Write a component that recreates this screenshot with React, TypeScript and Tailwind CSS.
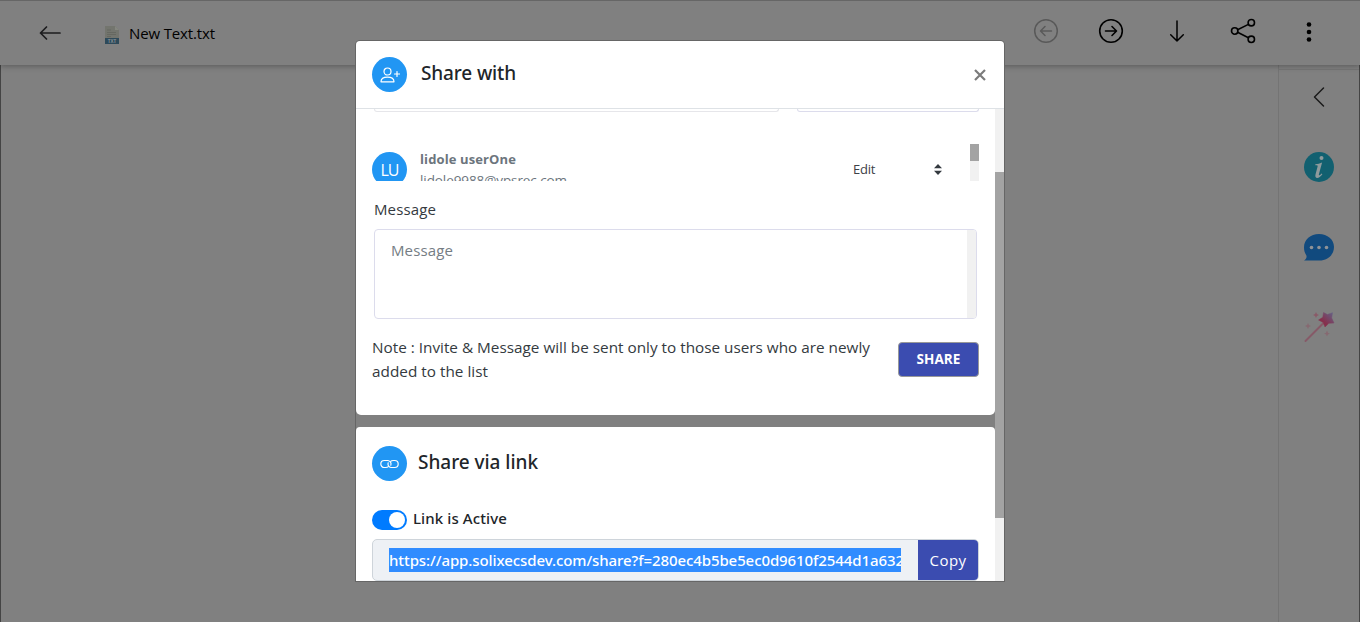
import React from "react";

function Txt({ children, w, className = "" }: { children: React.ReactNode; w: number; className?: string }) {
  const ref = React.useRef<HTMLSpanElement>(null);
  const [sp, setSp] = React.useState(0);
  React.useLayoutEffect(() => {
    const el = ref.current;
    if (!el) return;
    const n = (el.textContent || "").length;
    setSp((w - el.getBoundingClientRect().width) / n);
  }, [w]);
  return (
    <span ref={ref} className={"inline-block whitespace-nowrap " + className} style={{ letterSpacing: sp + "px" }}>
      {children}
    </span>
  );
}

function TxtIcon() {
  return (
    <svg width="14" height="18" viewBox="0 0 14 18" className="shrink-0">
      <path d="M0 0h10l4 4v14H0z" fill="#73756e" />
      <path d="M10 0v4h4z" fill="#84867f" />
      <path d="M2 4h4M2 6.500h9M2 8.500h9M2 10.500h4" stroke="#666861" strokeWidth="1" />
      <rect y="12" width="14" height="6" fill="#2e4a5a" />
      <text x="7" y="16.700" fontSize="4.500" fontWeight="700" textAnchor="middle" fill="#8b9499" fontFamily="Liberation Sans, sans-serif">TXT</text>
    </svg>
  );
}

const stroke = { fill: "none", stroke: "currentColor", strokeLinecap: "round", strokeLinejoin: "round" } as const;

function TopBar() {
  return (
    <header className="z-10 flex h-[65px] shrink-0 items-start border-t border-[#666] bg-[#808080] pt-px shadow-[0_1px_6px_rgba(0,0,0,0.32)]">
      <svg width="22" height="16" viewBox="0 0 22 16" className="ml-[39px] mt-[23px] shrink-0 text-[#1c1c1e]" {...stroke} strokeWidth="1.7">
        <path d="M21 8H1.500M7.500 2L1.500 8l6 6" />
      </svg>
      <div className="ml-[44px] mt-6 flex">
        <TxtIcon />
      </div>
      <div className="ml-[10px] mt-[19px] h-6 text-[15px] leading-6 text-black">
        <Txt w={86}>New Text.txt</Txt>
      </div>
      <div className="ml-auto mr-9 mt-4 flex items-center">
        <svg width="26" height="26" viewBox="0 0 26 26" className="text-[#595959]" {...stroke} strokeWidth="1.5">
          <circle cx="13" cy="13" r="11.300" /><path d="M18.500 13H8M12 8.500L7.500 13l4.500 4.500" />
        </svg>
        <svg width="26" height="26" viewBox="0 0 26 26" className="ml-[39px] text-black" {...stroke} strokeWidth="1.6">
          <circle cx="13" cy="13" r="11.300" /><path d="M7.500 13H18M14 8.500l4.500 4.500-4.500 4.500" />
        </svg>
        <svg width="16" height="24" viewBox="0 0 16 24" className="ml-[45px] text-black" {...stroke} strokeWidth="1.5">
          <path d="M8 2v20M1.700 15.700L8 22l6.300-6.300" />
        </svg>
        <svg width="26" height="26" viewBox="0 0 26 26" className="ml-[45px] text-black" {...stroke} strokeWidth="1.6">
          <circle cx="4.700" cy="13" r="3.200" /><circle cx="21.300" cy="4.700" r="3.200" /><circle cx="21.300" cy="21.300" r="3.200" />
          <path d="M7.600 11.700l10.800-5.300M7.600 14.300l10.800 5.400" />
        </svg>
        <svg width="6" height="22" viewBox="0 0 6 22" className="ml-[50px] mr-3 mt-0.5">
          <circle cx="3" cy="3.500" r="2.300" /><circle cx="3" cy="11" r="2.300" /><circle cx="3" cy="18.500" r="2.300" />
        </svg>
      </div>
    </header>
  );
}

const sparkle = "M0-3Q.4-.4 3 0 .4.400 0 3-.4.400-3 0-.4-.4 0-3z";

function SideBar() {
  return (
    <aside className="flex w-[82px] flex-col items-center border-x border-l-[#747474] border-r-[#444] pt-1">
      <div className="h-px w-full bg-[#757575]" />
      <svg width="14" height="22" viewBox="0 0 14 22" className="mt-[16px] text-[#1a1a1a]" {...stroke} strokeWidth="1.5">
        <path d="M11.500 2L2.500 11l9 9" />
      </svg>
      <svg width="30" height="30" viewBox="0 0 30 30" className="mt-11">
        <circle cx="15" cy="15" r="15" fill="#126070" />
        <circle cx="17.500" cy="6" r="2" fill="#8e9a9c" />
        <path d="M11.300 12.300q3.500-.4 6.800-1.800L14.900 22.200c-.4 1.700.7 1.600 2.700-.7l.8.700c-3.200 4.800-8.100 5-6.900.3l2.100-7.900c.3-1.200-.2-1.500-2.300-1.400z" fill="#8e9a9c" />
      </svg>
      <svg width="30" height="27" viewBox="0 0 30 27" className="mt-[52px]">
        <path d="M15 0c8.500 0 15 5.500 15 13s-6 13.500-14.500 13.500H0c2-1.500 3-2.800 2.400-5C.8 19 0 16.500 0 13.500 0 5.500 6.500 0 15 0z" fill="#114a7e" />
        <g fill="#8e9297"><circle cx="7.500" cy="13.500" r="1.800" /><circle cx="15" cy="13.500" r="1.800" /><circle cx="22.500" cy="13.500" r="1.800" /></g>
      </svg>
      <svg width="32" height="32" viewBox="0 0 32 32" className="mt-[50px]">
        <defs><linearGradient id="star" x1="0" y1="1" x2="1" y2="0"><stop offset="0.350" stopColor="#86304c" /><stop offset="1" stopColor="#62648a" /></linearGradient></defs>
        <path d="M2.500 30L20 12.500" stroke="#865a68" strokeWidth="2" strokeLinecap="round" />
        <path d="M20.500 1.500l3.900 2 5.100-1.800-.8 5.200L31 12l-5.200.300-3.800 3.700-1.800-4.500-4.700-2.500 4.300-2.700z" fill="url(#star)" stroke="url(#star)" strokeWidth=".5" strokeLinejoin="round" />
        <g fill="#8a5a68"><path d={sparkle} transform="translate(13 4)" /><path d={sparkle} transform="translate(5 15)" opacity=".6" /><path d={sparkle} transform="translate(24 22.500)" opacity=".6" /></g>
      </svg>
    </aside>
  );
}

function Badge({ children }: { children: React.ReactNode }) {
  return <div className="flex size-[35px] shrink-0 items-center justify-center rounded-full bg-[#2196f3] text-white">{children}</div>;
}

function ShareWith() {
  return (
    <section className="h-[306px] overflow-hidden rounded-b-[5px] bg-white">
      <div className="flex pl-[18px]">
        <div className="h-[3px] w-[405px] rounded-b-[4px] border border-t-0 border-[#e6e6ea]" />
        <div className="ml-[18px] h-[3px] w-[182px] rounded-b-[4px] border border-t-0 border-[#dcdcec]" />
      </div>
      <div className="ml-4 mt-[32px] flex h-[37px] w-[607px] overflow-hidden">
        <div className="mt-2"><Badge><span className="text-base font-medium leading-none"><Txt w={18}>LU</Txt></span></Badge></div>
        <div className="ml-[13px] w-[433px] pt-[5px] text-[13px] leading-[21px] text-[#6c757d]">
          <div className="h-[21px] font-bold"><Txt w={96}>lidole userOne</Txt></div>
          <div className="h-[21px] text-[13.500px]"><Txt w={147}>lidole9988@vpsrec.com</Txt></div>
        </div>
        <div className="w-[81px] pt-[15px] text-[13px] leading-[21px] text-[#3c4147]"><Txt w={22}>Edit</Txt></div>
        <svg width="8" height="11" viewBox="0 0 8 11" className="mt-5 shrink-0" fill="#343a40"><path d="M4 0L8 4.300H0zM4 11L0 6.700h8z" /></svg>
        <div className="ml-auto h-full w-[9px] shrink-0 bg-[#f1f1f1]"><div className="h-[17px] bg-[#a3a3a3]" /></div>
      </div>
      <div className="ml-[18px] mt-4 h-8 text-[15px] leading-6 text-[#343a40]"><Txt w={62}>Message</Txt></div>
      <div className="ml-[18px] flex h-[90px] w-[603px] overflow-hidden rounded-[4px] border border-[#dcdcec]">
        <div className="flex-1 pl-4 pt-2 text-[15px] leading-6 text-[#757d84]"><Txt w={62}>Message</Txt></div>
        <div className="w-[9px] bg-[#f1f1f1]" />
      </div>
      <div className="ml-4 mt-4 flex w-[607px]">
        <div className="text-[15.300px] leading-6 text-[#343a40]">
          <div className="h-6"><Txt w={498}>Note : Invite &amp; Message will be sent only to those users who are newly</Txt></div>
          <div className="h-6"><Txt w={116}>added to the list</Txt></div>
        </div>
        <button className="ml-auto mt-[7px] h-[35px] w-[81px] rounded-[4px] border border-[#999] bg-[#3b4cb0] text-[13.500px] font-bold leading-none text-white"><Txt w={44}>SHARE</Txt></button>
      </div>
    </section>
  );
}

function ShareLink() {
  return (
    <section className="flex-1 overflow-hidden rounded-t-[4px] bg-white pl-4 pt-[19px]">
      <div className="flex">
        <Badge>
          <svg width="19" height="10" viewBox="0 0 19 10" {...stroke} strokeWidth="1.2">
            <path d="M8.300 7.600Q7.500 8.500 5.800 8.500H4.300a3.500 3.500 0 0 1 0-7H8a3.500 3.500 0 0 1 2.800 4.700" />
            <path d="M10.700 2.400q.8-.9 2.500-.9h1.500a3.500 3.500 0 0 1 0 7H11A3.500 3.500 0 0 1 8.200 3.800" />
          </svg>
        </Badge>
        <h2 className="ml-[11px] mt-[2px] font-['Noto_Sans','Open_Sans',sans-serif] text-[19px] font-medium leading-7 text-[#212529]"><Txt w={120}>Share via link</Txt></h2>
      </div>
      <div className="mt-[26px] flex h-6">
        <div className="mt-[3px] flex h-5 w-[35px] justify-end rounded-full bg-[#007bff] p-[2px]"><div className="size-4 rounded-full bg-white" /></div>
        <div className="-mt-px ml-[6px] font-['Noto_Sans','Open_Sans',sans-serif] text-[15px] font-medium leading-6 text-[#212529]"><Txt w={94}>Link is Active</Txt></div>
      </div>
      <div className="mt-[8px] flex h-[42px] w-[607px] rounded-[5px] border border-[#ced4da] bg-[#eef1f5]">
        <div className="ml-4 mt-2 h-6 w-[512px] overflow-hidden bg-[#308cff] font-['Noto_Sans','Open_Sans',sans-serif] text-[15px] font-medium leading-6 text-white">
          <Txt w={515}>https://app.solixecsdev.com/share?f=280ec4b5be5ec0d9610f2544d1a632</Txt>
        </div>
        <button className="ml-auto h-10 w-[60px] rounded-r-[4px] bg-[#3b4cb0] text-[15px] leading-6 text-white"><Txt w={37}>Copy</Txt></button>
      </div>
    </section>
  );
}

function ShareDialog() {
  return (
    <div className="absolute left-[356px] top-[41px] z-20 flex h-[540px] w-[648px] flex-col overflow-hidden rounded-t-[4px] bg-[#808080] shadow-[0_0_0_1px_#666]">
      <div className="flex h-[68px] shrink-0 border-b border-[#dee2e6] bg-white pl-4 pr-[18px] pt-4">
        <Badge>
          <svg width="20" height="16" viewBox="0 0 20 16" {...stroke} strokeWidth="1.2">
            <circle cx="7.500" cy="4.500" r="3.500" /><path d="M1 14.800c0-2.800 2.500-4.600 6.500-4.600s6.500 1.800 6.500 4.600zM17 4.500v5M14.500 7h5" />
          </svg>
        </Badge>
        <h2 className="ml-[14px] mt-[2px] font-['Noto_Sans','Open_Sans',sans-serif] text-[19px] font-medium leading-7 text-[#212529]"><Txt w={95}>Share with</Txt></h2>
        <svg width="12" height="12" viewBox="0 0 12 12" className="ml-auto mt-3" stroke="#7b7b7b" strokeWidth="2.200"><path d="M1 1l10 10M11 1L1 11" /></svg>
      </div>
      <div className="flex min-h-0 flex-1">
        <div className="flex w-[639px] flex-col gap-3">
          <ShareWith />
          <ShareLink />
        </div>
        <div className="flex-1 bg-[#f1f1f1] pt-[63px]"><div className="h-[346px] bg-[#a3a3a3]" /></div>
      </div>
    </div>
  );
}

export default function App() {
  return (
    <div className="relative flex h-[622px] w-[1360px] flex-col overflow-hidden bg-[#808080] font-['Open_Sans','Noto_Sans',sans-serif]">
      <TopBar />
      <div className="flex min-h-0 flex-1 justify-end border-l border-[#444]"><SideBar /></div>
      <ShareDialog />
    </div>
  );
}
